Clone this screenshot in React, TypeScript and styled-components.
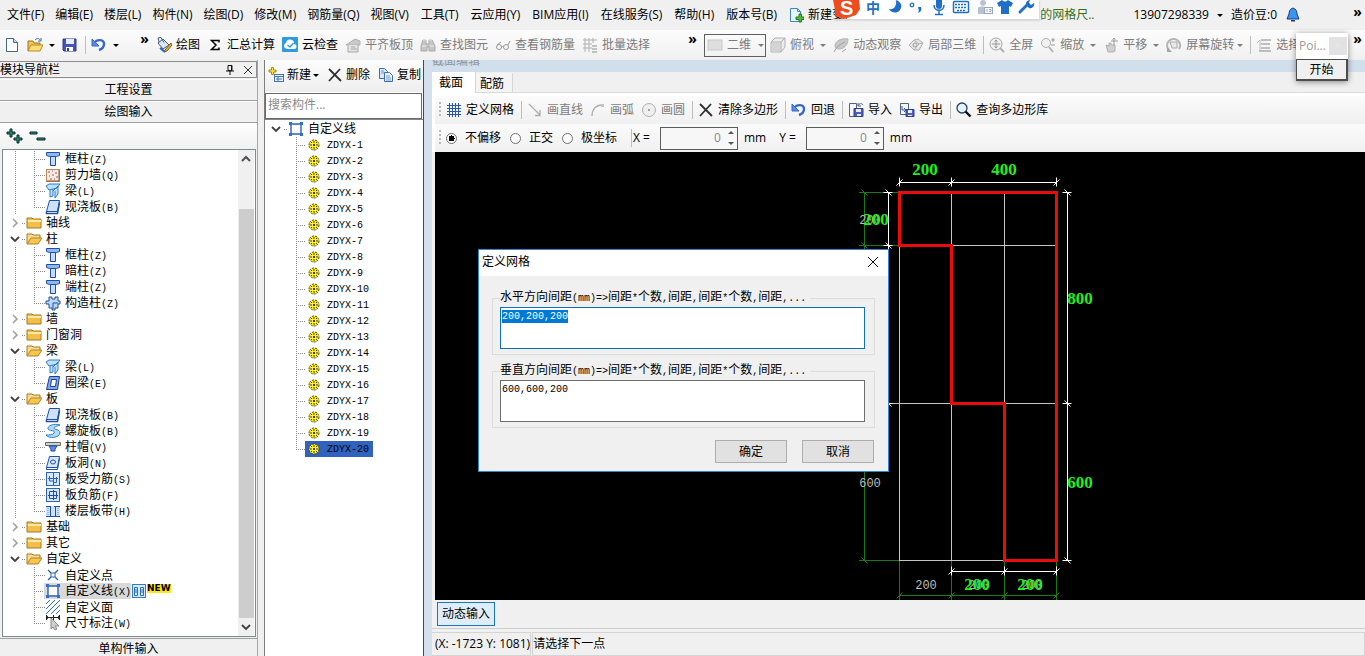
import React, { useEffect, useRef } from 'react';
import styled, { createGlobalStyle, css } from 'styled-components';

const UI_FONT = `"Open Sans", "Noto Sans CJK SC", sans-serif`;
const SONG_FONT = `"Liberation Mono", "Noto Sans CJK SC", monospace`;

const GlobalStyle = createGlobalStyle`
  *, *::before, *::after { box-sizing: border-box; }
  body { margin: 0; background: #f0f0f0; color: #000; font: 12px/16px ${UI_FONT}; }
  button, input, textarea, select { font: inherit; color: inherit; }
  button { margin: 0; padding: 0; border: 0; background: none; }
  svg { display: block; flex: none; }
`;

/* ---------- shared parts ---------- */

const Latin = styled.span`
  font-family: ${SONG_FONT};
  font-size: 10px;
`;

/* Half-width characters are set smaller so two of them fill one full-width cell. */
const Mixed = ({ text }: { text: string }) => (
  <>
    {text.split(/([\x20-\x7e]+)/).map((run, i) =>
      i % 2 ? <Latin key={i}>{run}</Latin> : run,
    )}
  </>
);

const Page = styled.div`
  display: flex;
  flex-direction: column;
  height: 100vh;
  min-height: 600px;
  overflow: hidden;
  position: relative;
`;

const Caret = styled.span`
  width: 0;
  border: 3px solid transparent;
  border-top-color: currentColor;
  border-bottom: 0;
`;

const Divider = styled.span`
  width: 1px;
  height: 18px;
  background: #bdbdbd;
  margin-right: -2px;
`;

const ToolButton = styled.button<{ $dim?: boolean; $tight?: boolean }>`
  display: flex;
  align-items: center;
  gap: 4px;
  white-space: nowrap;
  flex: none;
  color: ${(p) => (p.$dim ? '#7c7c7c' : '#000')};
  ${Caret} { margin-left: ${(p) => (p.$tight ? '-1px' : '2px')}; }
`;

const More = styled.button`
  align-self: flex-start;
  width: 9px;
  font: bold 14px/14px ${UI_FONT};
  flex: none;
`;

/* ---------- icons ---------- */

const Svg = ({ w = 16, h = 16, children }: { w?: number; h?: number; children: React.ReactNode }) => (
  <svg width={w} height={h} viewBox={`0 0 ${w} ${h}`} fill="none" aria-hidden="true">
    {children}
  </svg>
);

const I: Record<string, React.ReactElement> = {
  file: (
    <Svg>
      <path d="M2.500 1.500h7l4 4v9h-11z" fill="#fff" stroke="#44688c" />
      <path d="M9.500 1.500v4h4" fill="#c8dcf2" stroke="#44688c" />
    </Svg>
  ),
  open: (
    <Svg>
      <path d="M1 14V4h5l1 2h6v3" fill="#f3c552" stroke="#9d7420" />
      <path d="M1 14l3-6h12l-3 6z" fill="#ffdc78" stroke="#b98a25" />
      <path d="M8 3c2-2 4-2 5 0M14 1v3h-3" stroke="#3b67b0" />
    </Svg>
  ),
  save: (
    <Svg>
      <path d="M1 2h13v12H2L1 13z" fill="#4653b8" stroke="#2e3a8c" />
      <rect x="4" y="2" width="8" height="5" fill="#e7ecfb" />
      <rect x="4" y="10" width="7" height="4" fill="#fff" />
      <rect x="5" y="11" width="2" height="3" fill="#2e3a8c" />
    </Svg>
  ),
  undo: (
    <Svg>
      <path d="M3 6c3-4 10-4 10 1 0 3-2 5-5 6" stroke="#3767c9" strokeWidth="2.400" />
      <path d="M1 2v7h7z" fill="#5b8be6" stroke="#3767c9" />
    </Svg>
  ),
  bucket: (
    <Svg>
      <path d="M2 6l5-4 6 6-6 4z" fill="#dfe7f2" stroke="#3e5777" />
      <path d="M3 5L2 1l3-0.500 3 5" stroke="#3e5777" />
      <path d="M15 6l-6 7-1 2 3-1 5-6z" fill="#e9b42b" stroke="#7a5a16" />
      <path d="M4 11l5 4" stroke="#2e65c0" strokeWidth="2" />
    </Svg>
  ),
  sigma: (
    <Svg>
      <path d="M12 5.500V3.500H4.500L9 8l-4.500 4.500H12v-2" stroke="#000" strokeWidth="1.500" />
    </Svg>
  ),
  cloud: (
    <Svg>
      <rect width="16" height="15" rx="1" fill="#2c9be0" />
      <path d="M3 11a3 3 0 0 1 1-5 4 4 0 0 1 8 1 2.500 2.500 0 0 1 0 5H5z" fill="#fff" />
      <path d="M5.500 8l2.500 2 3.500-4" stroke="#2c9be0" strokeWidth="1.300" />
    </Svg>
  ),
  align: (
    <Svg>
      <path d="M1 8l9-6 5 2v4H1z" fill="#c9c9c9" stroke="#b0b0b0" />
      <path d="M3 8v7h10V8M6 10h4M6 12h6" fill="#e4e4e4" stroke="#a6a6a6" />
    </Svg>
  ),
  binoculars: (
    <Svg>
      <path d="M1 9l2-6h3v4h3V3h3l3 6v5H9v-4H7v4H1z" fill="#c6c6c6" stroke="#a8a8a8" />
      <path d="M3 3h3M9 3h3M2 9h4M10 9h4" stroke="#ededed" />
    </Svg>
  ),
  glasses: (
    <Svg>
      <circle cx="4" cy="10" r="2.500" stroke="#9a9a9a" />
      <circle cx="11" cy="10" r="2.500" stroke="#9a9a9a" />
      <path d="M6.500 10q1-1 2 0M2 8l4-3M13 8l2-4" stroke="#9a9a9a" />
    </Svg>
  ),
  batch: (
    <Svg>
      <path d="M1 3h14M1 7h9M1 11h9M3 1v14M7 1v14M11 1v5" stroke="#b0b0b0" />
      <path d="M10 9h5M10 12h5M10 15h5" stroke="#8f8f8f" />
    </Svg>
  ),
  box: (
    <Svg>
      <rect x="1" y="3" width="14" height="10" fill="#dedede" stroke="#c8c8c8" />
    </Svg>
  ),
  cube: (
    <Svg>
      <path d="M1 5l4-4h10v9l-4 5H1zM1 5h10v10M11 5l4-4" fill="#ececec" stroke="#b0b0b0" />
      <path d="M2 6h8v8H2z" fill="#d4d4d4" />
    </Svg>
  ),
  orbit: (
    <Svg>
      <path d="M2 9c0-5 6-8 13-7 0 6-4 10-9 10-2 0-4-1-4-3z" fill="#c8c8c8" stroke="#b4b4b4" />
      <path d="M1 15c2-5 6-8 11-10M9 15l4-3" stroke="#a0a0a0" />
    </Svg>
  ),
  local3d: (
    <Svg>
      <path d="M1 8l5-5 5 4-5 6zM6 3l4-1 5 4-4 1M15 6l-4 7-5 0" fill="#e6e6e6" stroke="#b0b0b0" />
      <circle cx="7" cy="8" r="2" stroke="#a0a0a0" />
    </Svg>
  ),
  full: (
    <Svg>
      <circle cx="7" cy="7" r="6" fill="#efefef" stroke="#a8a8a8" />
      <path d="M7 3v8M3 7h8M5.500 4.500L7 3l1.500 1.500M5.500 9.500L7 11l1.500-1.500" stroke="#989898" />
      <path d="M11 11l4 4" stroke="#b0b0b0" strokeWidth="2" />
    </Svg>
  ),
  zoom: (
    <Svg>
      <circle cx="6" cy="6" r="4.500" fill="#f1f1f1" stroke="#b0b0b0" />
      <path d="M9 10l4 5" stroke="#b0b0b0" strokeWidth="2" />
      <path d="M11 3h4M13 1v4M11 8h4" stroke="#9a9a9a" />
    </Svg>
  ),
  pan: (
    <Svg>
      <path d="M3 8l3 1V6h2v2h4v6l-2 1H5z" fill="#d0d0d0" stroke="#b0b0b0" />
      <path d="M11 1v7M8 4h7M9.500 2.500L11 1l1.500 1.500" stroke="#9a9a9a" />
    </Svg>
  ),
  rotate: (
    <Svg>
      <path d="M3 13A6.500 6.500 0 1 1 13 12" stroke="#b4b4b4" strokeWidth="2" />
      <path d="M4 5h7v6H6z" fill="#e8e8e8" stroke="#a8a8a8" />
      <path d="M1 10v5h5z" fill="#a4a4a4" />
    </Svg>
  ),
  pick: (
    <Svg>
      <path d="M5 3h10M5 7h9M5 11h9M3 14h12" stroke="#acacac" strokeWidth="1.500" />
      <path d="M1 6l3-3v10" stroke="#bcbcbc" />
    </Svg>
  ),
  newChange: (
    <Svg>
      <path d="M2.500 1.500h7l3 3v10h-10z" fill="#eaf4fd" stroke="#3c8ac4" />
      <path d="M9.500 1.500v3h3" stroke="#3c8ac4" />
      <path d="M11 7h2.500v3H16v2.500h-2.500V15H11v-2.500H8V10h3z" fill="#4fbf3a" stroke="#277a1e" />
    </Svg>
  ),
  bell: (
    <Svg>
      <path d="M8 1c-3 1-4 3-4 6l-2 5h12l-2-5c0-3-1-5-4-6z" fill="#3b94f2" stroke="#173f78" />
      <path d="M6 13h4v1.500H6z" fill="#173f78" />
    </Svg>
  ),
  add: (
    <Svg>
      <rect x="6.500" y="7.500" width="9" height="7" fill="#e8f1fb" stroke="#4475b0" />
      <path d="M7 9.500h8M8 12h6M10 10v4" stroke="#4475b0" />
      <path d="M3.500 0.500h2v2.500H8v2H5.500V7.500h-2V5H1V3h2.500z" fill="#ffe23e" stroke="#a38a18" />
    </Svg>
  ),
  cross: (
    <Svg>
      <path d="M2 2l12 12M13 2L2 14" stroke="#303030" strokeWidth="1.800" />
    </Svg>
  ),
  copy: (
    <Svg>
      <path d="M1.500 1.500h5l3 3v7h-8z" fill="#dceafa" stroke="#3a6cb0" />
      <path d="M6.500 5.500h5l3 3v6h-8z" fill="#eef5fd" stroke="#3a6cb0" />
      <path d="M8 9h4M8 11h5M8 13h5M3 4h3M3 6h3" stroke="#6b97d0" />
    </Svg>
  ),
  grid: (
    <Svg>
      <path d="M3.500 1v14M6.500 1v14M9.500 1v14M12.500 1v14M1 3.500h14M1 6.500h14M1 9.500h14M1 12.500h14" stroke="#2858a8" />
    </Svg>
  ),
  line: (
    <Svg>
      <path d="M2 2l11 11M13 8v5.500H8" stroke="#adadad" strokeWidth="1.300" />
    </Svg>
  ),
  arc: (
    <Svg>
      <path d="M2 14C2 7 6 3 12 3" stroke="#adadad" strokeWidth="1.300" />
      <rect x="11" y="2" width="3" height="3" fill="#c4c4c4" />
    </Svg>
  ),
  circle: (
    <Svg>
      <circle cx="8" cy="8" r="6.500" fill="#efefef" stroke="#b0b0b0" />
      <rect x="7" y="7" width="2" height="2" fill="#a0a0a0" />
    </Svg>
  ),
  importIcon: (
    <Svg>
      <path d="M1.500 1.500h7v13h-7z" fill="#f6f8fc" stroke="#52637e" />
      <path d="M6 6.500h9v8H6z" fill="#4f5fb8" stroke="#323f8a" />
      <path d="M8 7h5v3H8zM9 12h4v2H9z" fill="#e8ecfa" />
      <path d="M10 4c1-3 4-3 5-1M10 1v3h3" stroke="#52637e" />
    </Svg>
  ),
  exportIcon: (
    <Svg>
      <path d="M1.500 1.500h8v11h-8z" fill="#f6f8fc" stroke="#52637e" />
      <path d="M7 7.500h8v7H7z" fill="#4f5fb8" stroke="#323f8a" />
      <path d="M9 8h4v3H9zM9 13h4v1H9z" fill="#e8ecfa" />
      <path d="M3 4v4h3M5 6l2 2-2 2" stroke="#3455a8" />
    </Svg>
  ),
  search: (
    <Svg>
      <circle cx="6" cy="6" r="5" fill="#e4f2fb" stroke="#28425c" strokeWidth="1.300" />
      <path d="M9.500 9.500l5 5" stroke="#111" strokeWidth="2.400" />
    </Svg>
  ),
  folder: (
    <Svg>
      <path d="M1 13V3h5l1 1h8v9z" fill="#f2c04a" stroke="#a47a22" />
      <path d="M2 6h13" stroke="#ffe9a8" strokeWidth="2" />
    </Svg>
  ),
  folderOpen: (
    <Svg>
      <path d="M1 13V3h5l1 1h7v3" fill="#f8dc8c" stroke="#a47a22" />
      <path d="M1 13l4-6h11l-4 6z" fill="#f6c64e" stroke="#b0832a" />
    </Svg>
  ),
  column: (
    <Svg>
      <path d="M1.500 1.500h13v3l-3 1h-7l-3-1z" fill="#8db8f2" stroke="#214fa6" />
      <path d="M5.500 5.500h5v9h-5z" fill="#c6defa" stroke="#214fa6" />
    </Svg>
  ),
  shear: (
    <Svg>
      <rect x="1.500" y="2.500" width="13" height="12" fill="#fbeadb" stroke="#c08a58" />
      <path d="M3 5h2M7 4h1M10 6h2M4 9h1M7 8h2M11 10h2M5 12h2M9 12h1" stroke="#7d5a9c" />
      <path d="M14 3v11H2" stroke="#8a5428" />
    </Svg>
  ),
  beam: (
    <Svg>
      <path d="M1 3l3-2h11l-3 4-8 2zM5 7v7l3-1V6M8 8l5-5v8l-3 4V8" fill="#bfe0fa" stroke="#2c7cc8" />
    </Svg>
  ),
  slab: (
    <Svg>
      <path d="M4.500 1.500h10l-2 11h-11z" fill="#cfe2fb" stroke="#214fa6" />
      <path d="M1.500 12.500v2h11l2-11" stroke="#214fa6" strokeWidth="1.500" />
    </Svg>
  ),
  puzzle: (
    <Svg>
      <path d="M4 2h3v2h3V2h3v4h2v3h-2v4h-3v2H7v-2H4V9H1V6h3z" fill="#b7d6f8" stroke="#23508f" />
      <path d="M8 8h5M8 8v6" stroke="#23508f" />
    </Svg>
  ),
  ring: (
    <Svg>
      <path d="M4.500 1.500h10l-2 13h-11z" fill="#7fa8e8" stroke="#1c3f96" />
      <path d="M6.500 4.500h5l-1 7h-5z" fill="#fff" stroke="#1c3f96" />
    </Svg>
  ),
  spiral: (
    <Svg>
      <path d="M15 2C9 0 2 3 3 6c1 2 8 1 6 4-1 2-5 2-8 2 3 4 13 3 14-2C15 6 9 7 9 5c0-1 3-2 6-3z" fill="#b4dcf8" stroke="#2b80c8" />
    </Svg>
  ),
  cap: (
    <Svg>
      <path d="M0.500 3.500h15v3h-15z" fill="#cfcfcf" stroke="#666" />
      <path d="M4 7h8l-2 3v2H6v-2z" fill="#5d8fe0" stroke="#1c4fae" />
    </Svg>
  ),
  hole: (
    <Svg>
      <path d="M4.500 1.500h10l-2 11h-11z" fill="#d6e8fc" stroke="#214fa6" />
      <path d="M1.500 12.500v2h11l2-11" stroke="#214fa6" />
      <ellipse cx="8" cy="7" rx="2.500" ry="2" stroke="#214fa6" />
    </Svg>
  ),
  rebar: (
    <Svg>
      <rect x="1.500" y="1.500" width="13" height="13" fill="#d6e8fc" stroke="#2f62b8" />
      <path d="M8.500 2v12M3 7.500h10M4.500 5v5h4M8.500 11.500h3V6" stroke="#2f62b8" />
    </Svg>
  ),
  rebar2: (
    <Svg>
      <rect x="1.500" y="1.500" width="13" height="13" fill="#d6e8fc" stroke="#2f62b8" />
      <path d="M8.500 3v10M3 8.500h10M4.500 4.500h7v7h-7z" stroke="#1c4fae" />
    </Svg>
  ),
  strip: (
    <Svg>
      <rect x="1" y="3" width="14" height="10" fill="#cfe2fb" />
      <path d="M1 3.500h5M9 3.500h6M1 13.500h14M5.500 4v9M10.500 4v9" stroke="#214fa6" />
      <path d="M3 5v8M13 5v8" stroke="#5d8fe0" strokeDasharray="1 1" />
    </Svg>
  ),
  point: (
    <Svg>
      <path d="M3 3l3 3M13 3l-3 3M3 13l3-3M13 13l-3-3" stroke="#2a62b4" strokeWidth="1.300" />
      <path d="M6 6h4v4H6z" stroke="#2a62b4" />
    </Svg>
  ),
  poly: (
    <Svg>
      <path d="M3 3h10v10H3z" stroke="#2a62b4" strokeWidth="1.400" fill="#fff" />
      <path d="M1 1h3v3H1zM12 1h3v3h-3zM1 12h3v3H1zM12 12h3v3h-3z" fill="#2f6fd0" />
    </Svg>
  ),
  hatch: (
    <Svg>
      <path d="M1 5l4-4M1 10l9-9M1 15L15 1M6 15l9-9M11 15l4-4" stroke="#2f6fb8" />
    </Svg>
  ),
  dimension: (
    <Svg>
      <path d="M1.500 0v5M8.500 0v5M14.500 0v5M1 2.500h14M3 1L1 2.500 3 4M13 1l2 1.500L13 4" stroke="#222" />
      <path d="M6 3v11l2-2 2 3 2-1-2-3h4z" fill="#cfcfcf" stroke="#8a8a8a" />
    </Svg>
  ),
  detail: (
    <Svg>
      <rect x="1.500" y="1.500" width="13" height="13" fill="#d6ebfb" stroke="#2c7cc8" />
      <path d="M3.500 4.500h3v8h-3zM9.500 4.500h3v8h-3zM4 7h2M10 7h2M4 9h2M10 9h2" stroke="#2c6cb8" />
    </Svg>
  ),
  gear: (
    <Svg w={12} h={12}>
      <circle cx="6" cy="6" r="5" fill="#fff02a" stroke="#4a4800" strokeDasharray="2 1" />
      <path d="M6 2v2M6 8v2M2 6h2M8 6h2M3 3l1 1M8 8l1 1M9 3L8 4M4 8L3 9" stroke="#4a4800" />
      <rect x="5" y="5" width="2" height="2" fill="#4a4800" />
    </Svg>
  ),
  plusPlus: (
    <Svg w={17}>
      <path d="M1 4h3V1h2v3h3v2H6v3H4V6H1zM8 10h3V7h2v3h3v2h-3v3h-2v-3H8z" fill="#1f8a7a" stroke="#0c2c28" />
    </Svg>
  ),
  minusMinus: (
    <Svg w={17}>
      <path d="M1 4h7v2H1zM8 10h8v2H8z" fill="#1f8a7a" stroke="#0c2c28" />
    </Svg>
  ),
};

/* ---------- menu bar ---------- */

const MenuBar = styled.header`
  display: flex;
  align-items: center;
  height: 30px;
  flex: none;
  padding: 0 3px 0 7px;
`;

const Menus = styled.nav<{ $gap: number }>`
  display: flex;
  gap: ${(p) => p.$gap}px;
  margin-right: 11px;
  flex: none;
`;

const MenuItem = styled.button`
  white-space: nowrap;
  display: flex;
  align-items: center;
  gap: 4px;
`;

const Account = styled.div`
  display: flex;
  align-items: center;
  gap: 8px;
  margin-left: auto;
  flex: none;
  white-space: nowrap;
  ${More} { margin-left: 44px; margin-top: -6px; align-self: center; }
`;

const Tip = styled.a`
  color: #35701a;
  text-decoration: none;
  margin-right: 31px;
`;

const mainMenus = ['文件(F)', '编辑(E)', '楼层(L)', '构件(N)', '绘图(D)', '修改(M)', '钢筋量(Q)'];
const moreMenus = ['视图(V)', '工具(T)', '云应用(Y)', 'BIM应用(I)', '在线服务(S)', '帮助(H)', '版本号(B)'];

/* ---------- main tool bar ---------- */

const ToolBar = styled.div`
  display: flex;
  align-items: center;
  height: 30px;
  flex: none;
  padding: 0 3px 0 4px;
  background: linear-gradient(#fcfcfc, #f0f0f0);
  ${More} { margin-top: 2px; }
`;

const Group = styled.div<{ $gap?: number; $width?: number }>`
  display: flex;
  align-items: center;
  gap: ${(p) => p.$gap ?? 7}px;
  flex: none;
  ${(p) => p.$width && css`width: ${p.$width}px;`}
`;

const ViewMode = styled.button`
  display: flex;
  align-items: center;
  gap: 4px;
  width: 62px;
  height: 23px;
  padding: 0 2px;
  border: 1px solid #5f5f5f;
  color: #7c7c7c;
  margin-right: -3px;
  white-space: nowrap;
  ${Caret} { margin-left: 3px; }
`;

const Spacer = styled.span`
  flex: 1;
`;

/* ---------- body ---------- */

const Body = styled.div`
  display: flex;
  flex: 1;
  min-height: 0;
`;

const Navigator = styled.aside`
  width: 258px;
  flex: none;
  display: flex;
  flex-direction: column;
  margin-right: 6px;
  border-right: 1px solid #a6a6a6;
`;

const PanelTitle = styled.div`
  display: flex;
  align-items: center;
  height: 17px;
  flex: none;
  margin: 1px 0;
  border: 1px solid #8d8d8d;
  border-left: 0;
  padding-right: 3px;
  gap: 8px;
  white-space: nowrap;
`;

const SectionButton = styled.button`
  height: 22px;
  flex: none;
  border-bottom: 1px solid #a0a0a0;
  border-top: 1px solid #fff;
  text-align: center;
  line-height: 18px;
  &:last-child { margin-bottom: -4px; border-top-color: #a0a0a0; }
`;

const NavTools = styled.div`
  display: flex;
  align-items: center;
  gap: 6px;
  height: 26px;
  flex: none;
  padding-left: 6px;
  background: linear-gradient(#fff, #f1f1f1);
`;

const TreeBox = styled.div`
  flex: 1;
  min-height: 0;
  display: flex;
  margin: 0 1px 1px 2px;
  border: 1px solid #828790;
  background: #fff;
  overflow: hidden;
`;

const TreeList = styled.ul`
  list-style: none;
  margin: 0;
  padding: 1px 0 0;
  flex: 1;
`;

const dotsV = 'repeating-linear-gradient(#8a8a8a 0 1px, transparent 1px 2px)';
const dotsH = 'repeating-linear-gradient(90deg, #8a8a8a 0 1px, transparent 1px 2px)';

const FolderRow = styled.li`
  display: flex;
  align-items: center;
  height: 16px;
  padding-left: 6px;
  white-space: nowrap;
  svg:first-child { margin-right: 5px; }
  svg:nth-child(2) { margin-right: 4px; }
  background: ${dotsH} 19px 8px / 4px 1px no-repeat;
`;

const LeafRow = styled.li<{ $last?: boolean; $outer?: boolean }>`
  display: flex;
  align-items: center;
  height: 16px;
  padding-left: 41px;
  white-space: nowrap;
  background:
    ${dotsV} 31px 0 / 1px ${(p) => (p.$last ? '8px' : '16px')} no-repeat,
    ${dotsH} 31px 8px / 11px 1px no-repeat,
    ${dotsV} 12px 0 / ${(p) => (p.$outer ? '1px' : '0')} 16px no-repeat;
`;

const LeafLabel = styled.button<{ $active?: boolean }>`
  display: flex;
  align-items: center;
  gap: 4px;
  height: 16px;
  padding-left: 1px;
  background: ${(p) => (p.$active ? '#d9d9d9' : 'transparent')};
  > span { padding-top: 2px; }
`;

const NewBadge = styled.span`
  font: bold 9px/9px "DejaVu Sans", sans-serif;
  background: #ffe619;
  margin-bottom: 6px;
`;

const ScrollBar = styled.div`
  width: 16px;
  margin: 0 1px;
  flex: none;
  display: flex;
  flex-direction: column;
  align-items: center;
  background: #f0f0f0;
`;

const ScrollStep = styled.button`
  width: 16px;
  height: 18px;
  flex: none;
  display: grid;
  place-items: center;
`;

const Thumb = styled.div`
  width: 15px;
  flex: 1;
  margin-top: 41px;
  background: #cdcdcd;
`;

type Leaf = { icon: string; text: string; active?: boolean };
type Folder = { text?: string; items?: Leaf[] };

const tree: Folder[] = [
  { items: [
    { icon: 'column', text: '框柱(Z)' }, { icon: 'shear', text: '剪力墙(Q)' },
    { icon: 'beam', text: '梁(L)' }, { icon: 'slab', text: '现浇板(B)' }] },
  { text: '轴线' },
  { text: '柱', items: [
    { icon: 'column', text: '框柱(Z)' }, { icon: 'column', text: '暗柱(Z)' },
    { icon: 'column', text: '端柱(Z)' }, { icon: 'puzzle', text: '构造柱(Z)' }] },
  { text: '墙' },
  { text: '门窗洞' },
  { text: '梁', items: [{ icon: 'beam', text: '梁(L)' }, { icon: 'ring', text: '圈梁(E)' }] },
  { text: '板', items: [
    { icon: 'slab', text: '现浇板(B)' }, { icon: 'spiral', text: '螺旋板(B)' },
    { icon: 'cap', text: '柱帽(V)' }, { icon: 'hole', text: '板洞(N)' },
    { icon: 'rebar', text: '板受力筋(S)' }, { icon: 'rebar2', text: '板负筋(F)' },
    { icon: 'strip', text: '楼层板带(H)' }] },
  { text: '基础' },
  { text: '其它' },
  { text: '自定义', items: [
    { icon: 'point', text: '自定义点' }, { icon: 'poly', text: '自定义线(X)', active: true },
    { icon: 'hatch', text: '自定义面' }, { icon: 'dimension', text: '尺寸标注(W)' }] },
];

const Chevron = ({ dir }: { dir: 'up' | 'down' | 'right' }) => (
  <Svg w={12} h={12}>
    {dir === 'up' && <path d="M2 8l4-4 4 4" stroke="#505050" strokeWidth="2" />}
    {dir === 'down' && <path d="M2 4l4 4 4-4" stroke="#404040" strokeWidth="1.800" />}
    {dir === 'right' && <path d="M4 2l4 4-4 4" stroke="#a0a0a0" strokeWidth="1.600" />}
  </Svg>
);

/* ---------- component list ---------- */

const Components = styled.section`
  width: 160px;
  flex: none;
  display: flex;
  flex-direction: column;
  border-left: 1px solid #7d7d7d;
  border-right: 1px solid #4a4a4a;
  background: #fff;
  overflow: hidden;
`;

const ComponentTools = styled.div`
  display: flex;
  align-items: center;
  gap: 8px;
  height: 32px;
  flex: none;
  padding: 0 0 2px 3px;
  background: linear-gradient(#fdfdfd, #eee);
  ${ToolButton} { gap: 3px; }
`;

const SearchBox = styled.input`
  height: 26px;
  flex: none;
  margin: 1px 1px 0 0;
  padding: 0 2px 4px;
  border: 1px solid #6a6a6a;
  min-width: 0;
  outline: 0;
  border-radius: 0;
  background: #fff;
  &::placeholder { color: #8a8a8a; opacity: 1; }
`;

const ItemList = styled.ul`
  list-style: none;
  margin: 0;
  padding: 1px 0 0;
  border-top: 1px solid #828790;
`;

const RootRow = styled.li`
  display: flex;
  align-items: center;
  height: 16px;
  padding-left: 5px;
  svg:first-child { margin-right: 6px; }
  svg:nth-child(2) { margin-right: 4px; }
  background: ${dotsH} 19px 8px / 4px 1px no-repeat;
`;

const ItemRow = styled.li<{ $last?: boolean }>`
  height: 16px;
  padding-left: 40px;
  background:
    ${dotsV} 31px 0 / 1px ${(p) => (p.$last ? '8px' : '16px')} no-repeat,
    ${dotsH} 31px 8px / 10px 1px no-repeat;
`;

const ItemButton = styled.button<{ $selected?: boolean }>`
  display: flex;
  align-items: center;
  gap: 7px;
  height: 16px;
  padding: 0 4px 0 3px;
  background: ${(p) => (p.$selected ? '#2f63bd' : 'transparent')};
  > span { padding-top: 2px; }
`;

/* ---------- section editor ---------- */

const Editor = styled.main`
  flex: 1;
  min-width: 0;
  display: flex;
  flex-direction: column;
  background: #f0f0f0;
  border-left: 8px solid #d5e0ef;
`;

const EditorTitle = styled.div`
  height: 12px;
  flex: none;
  overflow: hidden;
  background: #d1deec;
  color: #8f979f;
  line-height: 2px;
`;

const Tabs = styled.div`
  display: flex;
  align-items: flex-end;
  height: 21px;
  flex: none;
  border-bottom: 1px solid #dadada;
`;

const Tab = styled.button<{ $active?: boolean }>`
  height: ${(p) => (p.$active ? 21 : 19)}px;
  padding: ${(p) => (p.$active ? '0 12px 0 7px' : '2px 8px 0 4px')};
  background: ${(p) => (p.$active ? '#fff' : '#f4f4f4')};
  border-right: 1px solid #d5d5d5;
  margin-bottom: ${(p) => (p.$active ? '-1px' : '0')};
`;

const EditorBars = styled.div`
  background: #fff;
  padding: 3px 0 0 3px;
  flex: none;
`;

const Bar = styled.div`
  display: flex;
  align-items: center;
  height: 28px;
  padding-left: 4px;
  background: linear-gradient(#fbfbfb, #f0f0f0);
  white-space: nowrap;
`;

const Grip = styled.span`
  width: 2px;
  height: 16px;
  margin-right: 5px;
  background: repeating-linear-gradient(#b9b9b9 0 2px, transparent 2px 4px);
`;

const Radio = styled.label`
  display: flex;
  align-items: center;
  gap: 8px;
  input {
    appearance: none;
    width: 11px;
    height: 11px;
    margin: 0;
    border: 1px solid #6f6f6f;
    border-radius: 50%;
    background: #fff;
  }
  input:checked { background: radial-gradient(#000 0 3px, #fff 3px); }
`;

const Offset = styled.label`
  display: flex;
  align-items: center;
  gap: 10px;
  margin-left: 3px;
`;

const SpinBox = styled.span`
  display: flex;
  align-items: center;
  width: 78px;
  height: 23px;
  border: 1px solid #5c5c5c;
  background: #f7f7f7;
  input {
    width: 60px;
    border: 0;
    padding: 0;
    outline: 0;
    background: transparent;
    text-align: right;
    color: #8a8a8a;
  }
`;

const Spins = styled.span`
  display: flex;
  flex-direction: column;
  gap: 8px;
  margin-left: 7px;
  span { border: 3px solid transparent; }
  span:first-child { border-top: 0; border-bottom-color: #555; }
  span:last-child { border-bottom: 0; border-top-color: #555; }
`;

const Unit = styled.span`
  margin: 0 10px 0 6px;
`;

const Canvas = styled.div`
  flex: 1;
  min-height: 0;
  margin-left: 3px;
  background: #000;
  position: relative;
  overflow: hidden;
`;

const BottomBar = styled.div`
  height: 29px;
  flex: none;
  padding: 2px 5px 0;
  border-bottom: 1px solid #cfcfcf;
`;

const DynamicInput = styled.button`
  height: 24px;
  padding: 0 4px;
  border: 1px solid #1c74c4;
  background: #dfedf8;
`;

const Status = styled.footer`
  display: flex;
  height: 27px;
  flex: none;
  padding-top: 3px;
  white-space: nowrap;
`;

const StatusCell = styled.div<{ $wide?: boolean }>`
  border: 1px solid #d4d4d4;
  border-left: 0;
  padding: 3px 0 3px 3px;
  margin-right: 1px;
  ${(p) => p.$wide && css`flex: 1; border-left: 1px solid #d4d4d4; padding: 3px 0; margin: 0;`}
`;

/* ---------- drawing ---------- */

const xs = [464.5, 516.5, 569.5, 621.5];
const ys = [40.5, 93.5, 251.5, 408.5];

const TickX = ({ x, y, c }: { x: number; y: number; c: string }) => (
  <path d={`M${x} ${y - 5}v9M${x - 3} ${y + 3}l6-6`} stroke={c} />
);
const TickY = ({ x, y, c }: { x: number; y: number; c: string }) => (
  <path d={`M${x - 5} ${y}h9M${x - 3} ${y - 3}l6 6`} stroke={c} />
);

const DrawingSvg = styled.svg`
  width: 100%;
  height: 100%;
  .size { font: bold 17px "Liberation Serif", serif; fill: #1ff01f; text-anchor: middle; }
  .grid { font: 12px "Liberation Mono", monospace; fill: #bdbdbd; text-anchor: middle; }
`;

const Drawing = () => (
  <DrawingSvg fill="none">
    <path d={xs.map((x) => `M${x} 40V408`).join('') + ys.map((y) => `M464 ${y}H621`).join('') + 'M453 251.500H464'} stroke="#c4c4c4" />
    <path d={`M429.500 40V408M424 40.500H464M424 93.500H464M424 408.500H464M464 443.500H621${xs.map((x) => `M${x} 409V448`).join('')}`} stroke="#177a17" />
    {[40.5, 93.5, 408.5].map((y) => <TickY key={y} x={429.5} y={y} c="#177a17" />)}
    {xs.map((x) => <TickX key={x} x={x} y={443.5} c="#177a17" />)}
    <path d="M464 30.500H621M453.500 40V251M632.500 40V408M516 419.500H621" stroke="#fff" />
    {[464.5, 516.5, 621.5].map((x) => <TickX key={x} x={x} y={30.5} c="#fff" />)}
    {[516.5, 569.5, 621.5].map((x) => <TickX key={x} x={x} y={419.5} c="#fff" />)}
    {[40.5, 93.5, 251.5].map((y) => <TickY key={y} x={453.5} y={y} c="#fff" />)}
    {[40.5, 251.5, 408.5].map((y) => <TickY key={y} x={632.5} y={y} c="#fff" />)}
    <path d="M464.500 40.500H621.500V408.500H569.500V251.500H516.500V93.500H464.500Z" stroke="#e80c0c" strokeWidth="3" />
    <text className="grid" x="435" y="72">200</text>
    <text className="grid" x="435" y="335">600</text>
    <text className="grid" x="491" y="437">200</text>
    <text className="grid" x="544" y="437">200</text>
    <text className="grid" x="597" y="437">200</text>
    <text className="size" x="490" y="23">200</text>
    <text className="size" x="569" y="23">400</text>
    <text className="size" x="441" y="73">200</text>
    <text className="size" x="645" y="152">800</text>
    <text className="size" x="645" y="336">600</text>
    <text className="size" x="542" y="438">200</text>
    <text className="size" x="595" y="438">200</text>
  </DrawingSvg>
);

/* ---------- grid dialog ---------- */

const Dialog = styled.form`
  position: absolute;
  left: 43px;
  top: 97px;
  width: 411px;
  border: 1px solid #2c86d8;
  background: #f0f0f0;
  padding-bottom: 8px;
`;

const DialogTitle = styled.div`
  display: flex;
  align-items: center;
  justify-content: space-between;
  height: 26px;
  padding: 0 8px 2px 3px;
  background: #fff;
`;

const GridField = styled.fieldset`
  margin: 13px 13px 0;
  padding: 0 9px 6px 7px;
  border: 1px solid #dcdcdc;
  height: 66px;
  & + & { margin-top: 7px; }
  legend { padding: 0 4px 0 0; line-height: 16px; white-space: nowrap; }
  textarea {
    display: block;
    width: 100%;
    height: 42px;
    padding: 2px 1px;
    border: 1px solid #6e6e6e;
    background: #fff;
    border-radius: 0;
    outline: 0;
    resize: none;
    font: 10px/13px ${SONG_FONT};
  }
  textarea:focus { border-color: #0f6fc0; }
  textarea::selection { background: #0078d7; color: #fff; }
`;

const DialogButtons = styled.div`
  display: flex;
  justify-content: flex-end;
  gap: 15px;
  padding: 12px 14px 0;
  button {
    width: 72px;
    height: 23px;
    border: 1px solid #adadad;
    background: #e1e1e1;
  }
`;

const GridDialog = () => {
  const first = useRef<HTMLTextAreaElement>(null);
  useEffect(() => {
    first.current?.focus();
    first.current?.select();
  }, []);
  return (
    <Dialog>
      <DialogTitle>
        定义网格
        <button type="button" aria-label="关闭">
          <Svg w={14} h={14}><path d="M2 2l10 10M12 2L2 12" stroke="#111" /></Svg>
        </button>
      </DialogTitle>
      <GridField>
        <legend><label htmlFor="h-grid"><Mixed text="水平方向间距(mm)=>间距*个数,间距,间距*个数,间距,..." /></label></legend>
        <textarea id="h-grid" ref={first} defaultValue="200,200,200" spellCheck={false} />
      </GridField>
      <GridField>
        <legend><label htmlFor="v-grid"><Mixed text="垂直方向间距(mm)=>间距*个数,间距,间距*个数,间距,..." /></label></legend>
        <textarea id="v-grid" defaultValue="600,600,200" spellCheck={false} />
      </GridField>
      <DialogButtons>
        <button type="button">确定</button>
        <button type="button">取消</button>
      </DialogButtons>
    </Dialog>
  );
};

/* ---------- floating windows ---------- */

const ImeBar = styled.div`
  position: absolute;
  left: 833px;
  top: 0;
  width: 206px;
  height: 20px;
  display: flex;
  align-items: flex-start;
  background: linear-gradient(90deg, transparent 14px, #fff 14px);
  border-bottom: 1px solid #d8d8d8;
  box-shadow: 1px 1px 1px #ddd;
`;

const Ime = () => (
  <ImeBar>
    <svg width="206" height="20" viewBox="0 0 206 20" fill="none" role="img" aria-label="输入法">
      <path d="M0 0h26l1 9-4 6-12 4-9-3 0-6z" fill="#ee4b1f" />
      <text x="7" y="15" fontFamily="Liberation Sans, sans-serif" fontWeight="bold" fontSize="20" fill="#fff">S</text>
      <text x="33" y="13" fontFamily="Noto Sans CJK SC, sans-serif" fontWeight="bold" fontSize="14" fill="#1f6fc6">中</text>
      <path d="M63 0c1 6-2 10-7 9 2 4 8 5 11 1 3-4 1-8-4-10z" fill="#1f6fc6" />
      <circle cx="79" cy="5" r="1.800" stroke="#1f6fc6" strokeWidth="1.300" />
      <path d="M85 7h3c1 3 0 5-3 6 1-2 1-3 0-6z" fill="#1f6fc6" />
      <rect x="103" y="-2" width="6" height="11" rx="3" fill="#1f6fc6" />
      <path d="M101 5c0 7 10 7 10 0M106 10v4M102 14.500h8" stroke="#1f6fc6" strokeWidth="1.500" />
      <rect x="120.500" y="1.500" width="15" height="11" rx="1" fill="#fff" stroke="#1f6fc6" strokeWidth="1.500" />
      <path d="M122 4.500h12M122 7.500h12M124 10.500h8" stroke="#1f6fc6" strokeWidth="1.500" strokeDasharray="2 1" />
      <path d="M150 0a3 3 0 1 0 .1 0M145 14V8c0-2 8-2 8 0v6z" fill="#b9c0cf" />
      <rect x="151.500" y="7.500" width="8" height="6" fill="#fff" stroke="#9aa6be" />
      <path d="M154 9v3M156 9.500h2v2h-2" stroke="#9aa6be" />
      <path d="M164 3l5-3c2 2 4 2 6 0l5 3-2 4-2-1v8h-8V6l-2 1z" fill="#1f6fc6" />
      <path d="M187 12l8-8" stroke="#1f6fc6" strokeWidth="3" strokeLinecap="round" />
      <path d="M197 0a4 4 0 0 0-4 5l3 3a4 4 0 0 0 5-5l-3 2-2-2z" fill="#1f6fc6" />
    </svg>
  </ImeBar>
);

const FloatWindow = styled.div`
  position: absolute;
  right: 17px;
  top: 33px;
  width: 52px;
  background: #fff;
  box-shadow: 0 1px 6px rgba(0, 0, 0, 0.45);
  color: #9a9a9a;
`;

const FloatTitle = styled.div`
  display: flex;
  align-items: center;
  justify-content: space-between;
  height: 26px;
  padding: 0 1px 0 3px;
  button { width: 18px; height: 18px; background: #e2e2e2; color: #e9e9e9; }
`;

const StartButton = styled.button`
  width: 100%;
  height: 22px;
  border: 1px solid #4d4d4d;
  border-right-width: 2px;
  border-bottom-width: 2px;
  background: #f0f0f0;
  color: #000;
`;

/* ---------- page ---------- */

const Tool = ({ icon, text, dim, caret, tight }: { icon: string; text?: string; dim?: boolean; caret?: boolean; tight?: boolean }) => (
  <ToolButton type="button" $dim={dim} $tight={tight} aria-label={text ?? icon}>
    {I[icon]}
    {text}
    {caret && <Caret />}
  </ToolButton>
);

export default function App() {
  return (
    <Page>
      <GlobalStyle />
      <MenuBar>
        <Menus $gap={11}>
          {mainMenus.map((m) => <MenuItem key={m}>{m}</MenuItem>)}
        </Menus>
        <Menus $gap={12}>
          {moreMenus.map((m) => <MenuItem key={m}>{m}</MenuItem>)}
        </Menus>
        <MenuItem>{I.newChange}新建变更</MenuItem>
        <Account>
          <Tip href="#">多边形编辑器的网格尺..</Tip>
          13907298339
          <Caret />
          <span>造价豆:0</span>
          {I.bell}
          <More aria-label="更多">»</More>
        </Account>
      </MenuBar>

      <ToolBar>
        <Group $gap={7} $width={136}>
          <Tool icon="file" />
          <Tool icon="open" caret />
          <Tool icon="save" />
          <Divider />
          <Tool icon="undo" caret />
        </Group>
        <More aria-label="更多">»</More>
        <Group>
          <span />
          <Tool icon="bucket" text="绘图" />
          <Tool icon="sigma" text="汇总计算" />
          <Tool icon="cloud" text="云检查" />
          <Tool icon="align" text="平齐板顶" dim />
          <Tool icon="binoculars" text="查找图元" dim />
          <Tool icon="glasses" text="查看钢筋量" dim />
          <Tool icon="batch" text="批量选择" dim />
        </Group>
        <Group $width={38} />
        <More aria-label="更多">»</More>
        <Group>
          <span />
          <ViewMode type="button">{I.box}二维<Caret /></ViewMode>
          <Tool icon="cube" text="俯视" dim caret />
          <Tool icon="orbit" text="动态观察" dim />
          <Tool icon="local3d" text="局部三维" dim />
          <Divider />
          <Tool icon="full" text="全屏" dim />
          <Tool icon="zoom" text="缩放" dim caret />
          <Tool icon="pan" text="平移" dim caret />
          <Tool icon="rotate" text="屏幕旋转" dim caret tight />
          <Divider />
          <Tool icon="pick" text="选择" dim />
        </Group>
        <Spacer />
        <More aria-label="更多">»</More>
      </ToolBar>

      <Body>
        <Navigator>
          <PanelTitle>
            模块导航栏
            <Spacer />
            <Svg w={10} h={12}><path d="M3 1.500h4v5H3zM6.500 1v6M1 7h8M5 7v4" stroke="#111" /></Svg>
            <Svg w={10} h={12}><path d="M1 2l8 8M9 2l-8 8" stroke="#333" /></Svg>
          </PanelTitle>
          <SectionButton>工程设置</SectionButton>
          <SectionButton>绘图输入</SectionButton>
          <NavTools>
            <button aria-label="展开">{I.plusPlus}</button>
            <button aria-label="折叠">{I.minusMinus}</button>
          </NavTools>
          <TreeBox>
            <TreeList>
              {tree.map((f, fi) => (
                <React.Fragment key={fi}>
                  {f.text && (
                    <FolderRow>
                      <Chevron dir={f.items ? 'down' : 'right'} />
                      {f.items ? I.folderOpen : I.folder}
                      {f.text}
                    </FolderRow>
                  )}
                  {f.items?.map((leaf, li) => (
                    <LeafRow key={leaf.text + li} $last={li === f.items!.length - 1} $outer={fi < tree.length - 1}>
                      <LeafLabel $active={leaf.active}>
                        {I[leaf.icon]}
                        <span><Mixed text={leaf.text} /></span>
                      </LeafLabel>
                      {leaf.active && <>{I.detail}<NewBadge>NEW</NewBadge></>}
                    </LeafRow>
                  ))}
                </React.Fragment>
              ))}
            </TreeList>
            <ScrollBar>
              <ScrollStep aria-label="向上"><Chevron dir="up" /></ScrollStep>
              <Thumb />
              <ScrollStep aria-label="向下"><Chevron dir="down" /></ScrollStep>
            </ScrollBar>
          </TreeBox>
          <SectionButton>单构件输入</SectionButton>
        </Navigator>

        <Components>
          <ComponentTools>
            <Tool icon="add" text="新建" caret tight />
            <Tool icon="cross" text="删除" />
            <Tool icon="copy" text="复制" />
          </ComponentTools>
          <SearchBox aria-label="搜索构件" placeholder="搜索构件..." />
          <ItemList>
            <RootRow><Chevron dir="down" />{I.poly}自定义线</RootRow>
            {Array.from({ length: 20 }, (_, i) => (
              <ItemRow key={i} $last={i === 19}>
                <ItemButton $selected={i === 19}>{I.gear}<Latin>ZDYX-{i + 1}</Latin></ItemButton>
              </ItemRow>
            ))}
          </ItemList>
        </Components>

        <Editor>
          <EditorTitle>截面编辑</EditorTitle>
          <Tabs>
            <Tab $active>截面</Tab>
            <Tab>配筋</Tab>
          </Tabs>
          <EditorBars>
            <Bar>
              <Grip />
              <Group>
                <Tool icon="grid" text="定义网格" />
                <Divider />
                <Tool icon="line" text="画直线" dim />
                <Tool icon="arc" text="画弧" dim />
                <Tool icon="circle" text="画圆" dim />
                <Divider />
                <Tool icon="cross" text="清除多边形" />
                <Divider />
                <Tool icon="undo" text="回退" />
                <Divider />
                <Tool icon="importIcon" text="导入" />
                <Tool icon="exportIcon" text="导出" />
                <Divider />
                <Tool icon="search" text="查询多边形库" />
              </Group>
            </Bar>
            <Bar>
              <Grip />
              <Group $gap={9} $width={185}>
                <Radio><input type="radio" name="mode" defaultChecked />不偏移</Radio>
                <Radio><input type="radio" name="mode" />正交</Radio>
                <Radio><input type="radio" name="mode" />极坐标</Radio>
              </Group>
              <Divider />
              <Offset>
                <span>X =</span>
                <SpinBox><input defaultValue="0" /><Spins><span /><span /></Spins></SpinBox>
              </Offset>
              <Unit>mm</Unit>
              <Offset>
                <span>Y =</span>
                <SpinBox><input defaultValue="0" /><Spins><span /><span /></Spins></SpinBox>
              </Offset>
              <Unit>mm</Unit>
            </Bar>
          </EditorBars>
          <Canvas>
            <Drawing />
            <GridDialog />
          </Canvas>
          <BottomBar><DynamicInput>动态输入</DynamicInput></BottomBar>
          <Status>
            <StatusCell>(X: -1723 Y: 1081)</StatusCell>
            <StatusCell $wide>请选择下一点</StatusCell>
          </Status>
        </Editor>
      </Body>

      <Ime />
      <FloatWindow>
        <FloatTitle>Poi...<button aria-label="关闭">×</button></FloatTitle>
        <StartButton>开始</StartButton>
      </FloatWindow>
    </Page>
  );
}
